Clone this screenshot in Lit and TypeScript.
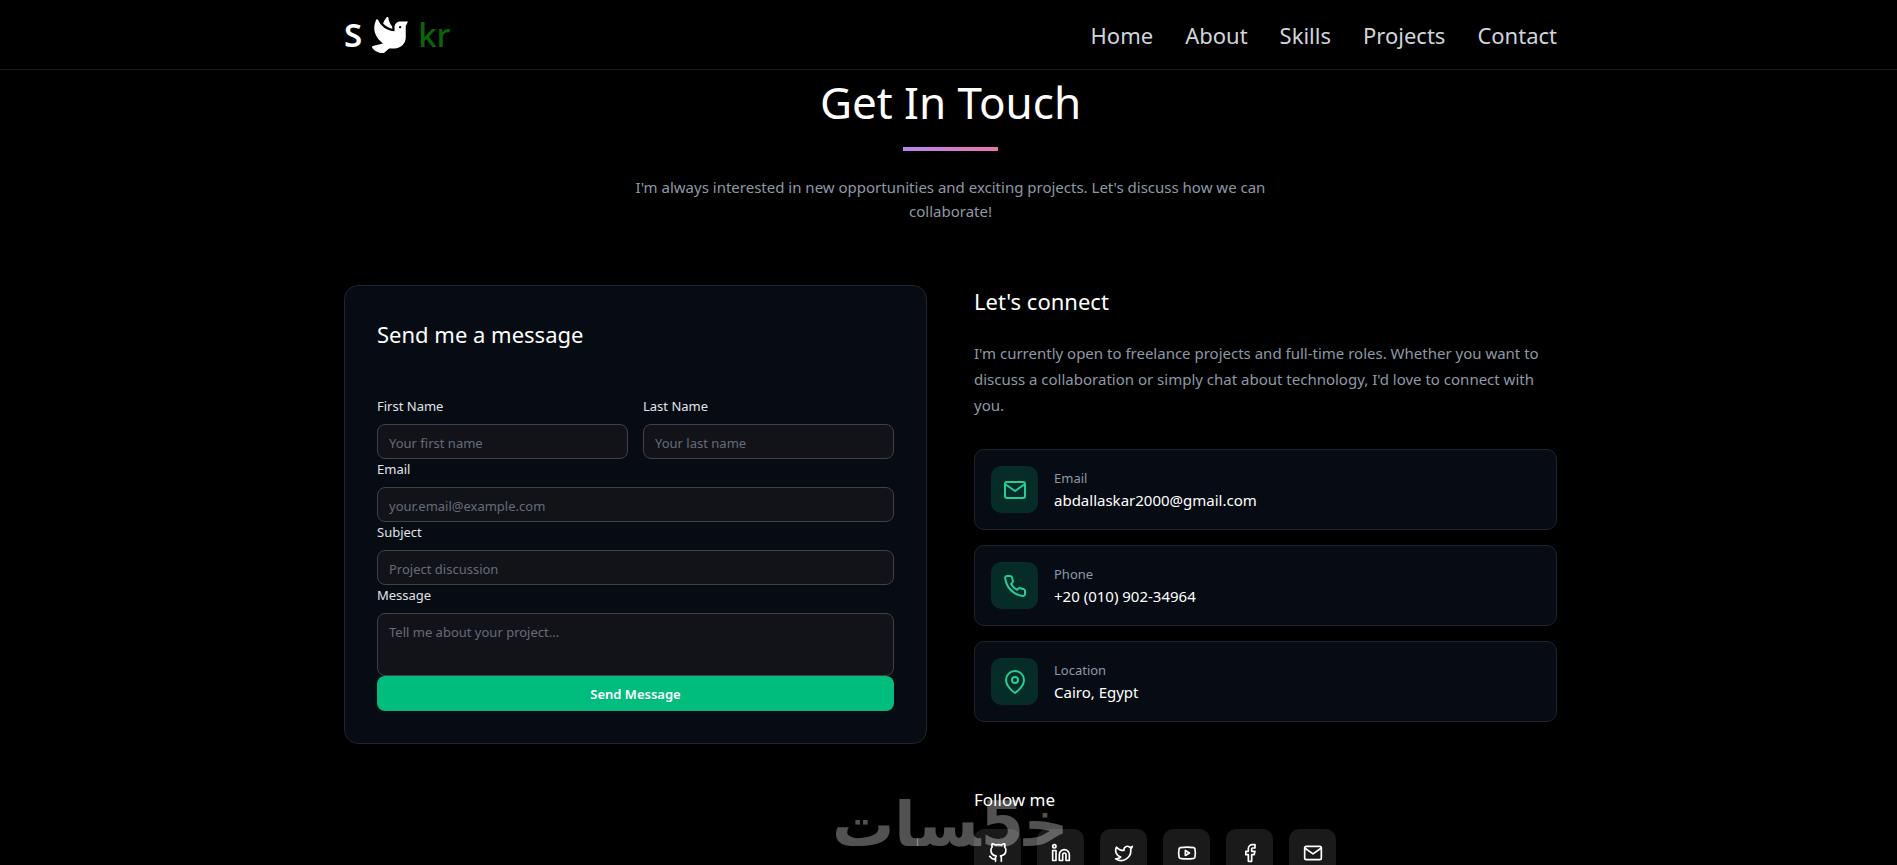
import { LitElement, html, css, svg } from "lit";
import { customElement } from "lit/decorators.js";

const mail = svg`<path d="M4 4h16c1.1 0 2 .9 2 2v12c0 1.1-.9 2-2 2H4c-1.1 0-2-.9-2-2V6c0-1.1.9-2 2-2z"/><polyline points="22,6 12,13 2,6"/>`;
const phone = svg`<path d="M22 16.92v3a2 2 0 0 1-2.18 2 19.79 19.79 0 0 1-8.63-3.07 19.5 19.5 0 0 1-6-6 19.79 19.79 0 0 1-3.07-8.67A2 2 0 0 1 4.11 2h3a2 2 0 0 1 2 1.72 12.84 12.84 0 0 0 .7 2.81 2 2 0 0 1-.45 2.11L8.09 9.91a16 16 0 0 0 6 6l1.27-1.27a2 2 0 0 1 2.11-.45 12.84 12.84 0 0 0 2.81.7A2 2 0 0 1 22 16.92z"/>`;
const pin = svg`<path d="M21 10c0 7-9 13-9 13s-9-6-9-13a9 9 0 0 1 18 0z"/><circle cx="12" cy="10" r="3"/>`;
const github = svg`<path d="M9 19c-5 1.5-5-2.5-7-3m14 6v-3.87a3.37 3.37 0 0 0-.94-2.61c3.14-.35 6.44-1.54 6.44-7A5.44 5.44 0 0 0 20 4.77 5.07 5.07 0 0 0 19.91 1S18.73.65 16 2.48a13.38 13.38 0 0 0-7 0C6.27.65 5.09 1 5.09 1A5.07 5.07 0 0 0 5 4.77a5.44 5.44 0 0 0-1.5 3.78c0 5.42 3.3 6.61 6.44 7A3.37 3.37 0 0 0 9 18.13V22"/>`;
const linkedin = svg`<path d="M16 8a6 6 0 0 1 6 6v7h-4v-7a2 2 0 0 0-4 0v7h-4v-7a6 6 0 0 1 6-6z"/><rect x="2" y="9" width="4" height="12"/><circle cx="4" cy="4" r="2"/>`;
const twitter = svg`<path d="M22 4s-.7 2.1-2 3.4c1.6 10-9.4 17.3-18 11.6 2.2.1 4.4-.6 6-2C3 15.5.5 9.6 3 5c2.2 2.6 5.6 4.1 9 4-.9-4.2 4-6.6 7-3.8 1.1 0 3-1.2 3-1.2z"/>`;
const youtube = svg`<path d="M2.5 17a24.12 24.12 0 0 1 0-10 2 2 0 0 1 1.4-1.4 49.56 49.56 0 0 1 16.2 0A2 2 0 0 1 21.5 7a24.12 24.12 0 0 1 0 10 2 2 0 0 1-1.4 1.4 49.55 49.55 0 0 1-16.2 0A2 2 0 0 1 2.5 17"/><path d="m10 15 5-3-5-3z"/>`;
const facebook = svg`<path d="M18 2h-3a5 5 0 0 0-5 5v3H7v4h3v8h4v-8h3l1-4h-4V7a1 1 0 0 1 1-1h3z"/>`;

@customElement("app-root")
export class AppRoot extends LitElement {
  static styles = css`
    :host {
      display: block;
      position: relative;
      height: 100vh;
      overflow: hidden;
      background: #000;
      color: #fff;
      font-family: "Noto Sans", "Open Sans", sans-serif;
      font-size: 15px;
    }
    * { box-sizing: border-box; }
    h1, h2, h3, p { margin: 0; font-weight: 400; }
    a { color: inherit; text-decoration: none; }
    .wrap {
      max-width: 1217px;
      margin: 0 auto;
      padding-left: 4px;
    }
    header { border-bottom: 1px solid #1c1c1c; }
    .bar {
      display: flex;
      align-items: center;
      justify-content: space-between;
      height: 69px;
    }
    .logo {
      display: flex;
      align-items: center;
      gap: 10px;
      font-size: 33px;
      font-weight: 600;
      line-height: 40px;
    }
    .logo svg { width: 36px; height: 36px; fill: #fff; }
    .logo .green { color: #076409; font-weight: 500; }
    nav {
      display: flex;
      gap: 32px;
      font-size: 22px;
      line-height: 32px;
      color: #d1d5db;
    }
    .intro {
      display: flex;
      flex-direction: column;
      align-items: center;
      text-align: center;
      padding-top: 8px;
    }
    h1 { font-size: 44px; line-height: 48px; }
    .rule {
      width: 95px;
      height: 4px;
      margin: 21px 0 24px;
      background: linear-gradient(90deg, #b985f0, #ea74a8);
    }
    .intro p { max-width: 660px; line-height: 24px; color: #8f98a6; }
    .columns {
      display: grid;
      grid-template-columns: 1fr 1fr;
      align-items: start;
      gap: 47px;
      margin-top: 62px;
    }
    .panel {
      padding: 32px;
      border: 1px solid #20242b;
      border-radius: 14px;
      background: #070b13;
    }
    h2 { font-size: 22px; line-height: 32px; }
    form { margin-top: 46px; }
    .pair { display: grid; grid-template-columns: 1fr 1fr; gap: 15px; }
    label {
      display: block;
      margin-bottom: 8px;
      font-size: 13px;
      line-height: 20px;
      color: #e0e3e8;
    }
    input, textarea {
      display: block;
      width: 100%;
      height: 35px;
      padding: 2px 11px 0;
      border: 1px solid #404146;
      border-radius: 8px;
      background: #121318;
      color: #fff;
      font: inherit;
      font-size: 13px;
      line-height: 20px;
      resize: none;
      outline: none;
    }
    textarea { height: 63px; padding-top: 8px; }
    ::placeholder { color: #656c7b; opacity: 1; }
    button {
      display: block;
      width: 100%;
      height: 35px;
      padding: 0;
      border: 0;
      border-radius: 8px;
      background: #00bc7d;
      color: #fff;
      font: inherit;
      font-size: 13px;
      font-weight: 600;
    }
    .about { margin-top: 23px; line-height: 26px; color: #8f98a6; }
    .cards { display: grid; gap: 15px; margin-top: 31px; }
    .card {
      display: flex;
      align-items: center;
      gap: 16px;
      padding: 16px;
      border: 1px solid #1f242b;
      border-radius: 10px;
      background: #070b13;
    }
    .tile {
      display: grid;
      place-items: center;
      flex: none;
      width: 47px;
      height: 47px;
      border-radius: 10px;
    }
    .tile svg {
      width: 20px;
      height: 20px;
      fill: none;
      stroke: currentColor;
      stroke-width: 2;
      stroke-linecap: round;
      stroke-linejoin: round;
    }
    .card .tile { background: #052c27; color: #28cc95; }
    .card .tile svg { width: 24px; height: 24px; }
    .name { font-size: 13px; line-height: 20px; color: #8f98a6; }
    .value { line-height: 24px; }
    h3 { margin-top: 64px; font-size: 17px; line-height: 28px; }
    .social { display: flex; gap: 16px; margin-top: 15px; }
    .social .tile { background: #1a1a1a; }
    .mark {
      position: absolute;
      left: 832px;
      top: 789px;
      font-family: "DejaVu Sans", sans-serif;
      font-weight: 700;
      font-size: 62px;
      line-height: 72px;
      color: rgba(255, 255, 255, 0.32);
      pointer-events: none;
    }
  `;

  icon(shape: unknown) {
    return html`<svg viewBox="0 0 24 24" aria-hidden="true">${shape}</svg>`;
  }

  field(id: string, label: string, hint: string, type = "text") {
    return html`<div>
      <label for=${id}>${label}</label>
      <input id=${id} type=${type} placeholder=${hint} />
    </div>`;
  }

  card(shape: unknown, name: string, value: string) {
    return html`<div class="card">
      <span class="tile">${this.icon(shape)}</span>
      <div><p class="name">${name}</p><p class="value">${value}</p></div>
    </div>`;
  }

  render() {
    const links = ["Home", "About", "Skills", "Projects", "Contact"];
    const social: [string, unknown][] = [
      ["GitHub", github], ["LinkedIn", linkedin], ["Twitter", twitter],
      ["YouTube", youtube], ["Facebook", facebook], ["Mail", mail],
    ];
    return html`
      <header>
        <div class="wrap bar">
          <a class="logo" href="#home">
            <span>S</span>
            <svg viewBox="0 0 512 512" aria-hidden="true"><path d="M288 167.2v-28.1c-28.2-36.3-47.1-79.3-54.1-125.2-2.1-13.5-19-18.8-27.8-8.3-21.1 24.9-37.7 54.1-48.9 86.5 34.2 38.3 80 64.6 130.8 75.1zM400 64c-44.2 0-80 35.9-80 80.1v59.4C215.6 197.3 127 133 87 41.8c-5.5-12.5-23.2-13.2-29-.9C41.4 76 32 115.2 32 156.6c0 70.8 34.1 136.9 85.1 185.9 13.2 12.7 26.1 23.2 38.9 32.8l-143.9 36C1.4 414-3.4 426.4 2.6 435.7 20 462.6 63 508.2 155.8 512c8 .3 16-2.6 22.1-7.9l65.2-56.1H320c88.4 0 160-71.5 160-159.9V128l32-64H400zm0 96.1c-8.8 0-16-7.2-16-16s7.2-16 16-16 16 7.2 16 16-7.2 16-16 16z"/></svg>
            <span class="green">kr</span>
          </a>
          <nav>${links.map((l) => html`<a href="#${l.toLowerCase()}">${l}</a>`)}</nav>
        </div>
      </header>
      <main class="wrap">
        <section class="intro">
          <h1>Get In Touch</h1>
          <div class="rule"></div>
          <p>I'm always interested in new opportunities and exciting projects. Let's discuss how we can collaborate!</p>
        </section>
        <div class="columns">
          <section class="panel">
            <h2>Send me a message</h2>
            <form @submit=${(e: Event) => e.preventDefault()}>
              <div class="pair">
                ${this.field("first", "First Name", "Your first name")}
                ${this.field("last", "Last Name", "Your last name")}
              </div>
              ${this.field("email", "Email", "your.email@example.com", "email")}
              ${this.field("subject", "Subject", "Project discussion")}
              <label for="message">Message</label>
              <textarea id="message" placeholder="Tell me about your project..."></textarea>
              <button type="submit">Send Message</button>
            </form>
          </section>
          <section>
            <h2>Let's connect</h2>
            <p class="about">I'm currently open to freelance projects and full-time roles. Whether you want to discuss a collaboration or simply chat about technology, I'd love to connect with you.</p>
            <div class="cards">
              ${this.card(mail, "Email", "abdallaskar2000@gmail.com")}
              ${this.card(phone, "Phone", "+20 (010) 902-34964")}
              ${this.card(pin, "Location", "Cairo, Egypt")}
            </div>
            <h3>Follow me</h3>
            <div class="social">
              ${social.map(([n, s]) => html`<a class="tile" href="#${n.toLowerCase()}" aria-label=${n}>${this.icon(s)}</a>`)}
            </div>
          </section>
        </div>
      </main>
      <div class="mark" dir="rtl" lang="ar">خ&zwj;5&zwj;سات</div>
    `;
  }
}
